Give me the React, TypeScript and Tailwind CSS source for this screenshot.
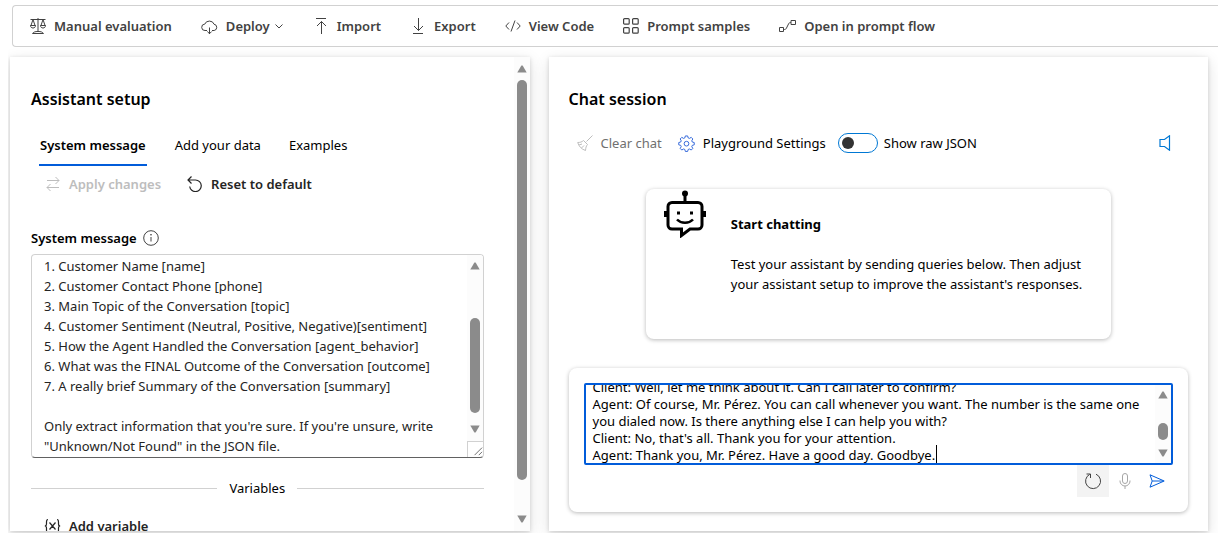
import { useLayoutEffect, useRef } from "react";
import type { ReactNode } from "react";

type IconProps = { children: ReactNode; className?: string; box?: string; stroke?: number };

function Icon({ children, className = "size-4", box = "0 0 16 16", stroke = 1 }: IconProps) {
  return (
    <svg
      viewBox={box}
      className={`shrink-0 ${className}`}
      fill="none"
      stroke="currentColor"
      strokeWidth={stroke}
      aria-hidden="true"
    >
      {children}
    </svg>
  );
}

const ScalesIcon = () => (
  <Icon>
    <path d="M.5 1.5h15M8 0v13.500M3 1.500.8 8M3 1.500 5.200 8M13 1.500 10.800 8M13 1.500l2.200 6.500M.5 7.500h5c0 1.500-1 2.500-2.500 2.500S.5 9 .5 7.500zM10.500 7.500h5c0 1.500-1 2.500-2.500 2.500s-2.500-1-2.500-2.500zM2.500 15.500h11c-1-1.500-2.500-2-5.500-2s-4.500.5-5.500 2z" />
  </Icon>
);

const CloudIcon = () => (
  <Icon className="h-4 w-[17px]" box="0 0 17 16">
    <path d="M6 12.500H4a3.200 3.200 0 0 1-.2-6.400A4.800 4.300 0 0 1 13 6.200a3.200 3.200 0 0 1 .2 6.300H11M8.500 9.500V16M6.300 13.500l2.200 2.200 2.200-2.200" />
  </Icon>
);

const ImportIcon = () => (
  <Icon>
    <path d="M3 .5h10M8.500 16V3.500M4 8l4.500-4.500L13 8" />
  </Icon>
);

const ExportIcon = () => (
  <Icon>
    <path d="M3 15.500h10M8.500 0v12.500M4 8l4.500 4.500L13 8" />
  </Icon>
);

const CodeIcon = () => (
  <Icon>
    <path d="M4 4.500.8 8 4 11.500M12 4.500 15.200 8 12 11.500M10 2.500l-4 11" />
  </Icon>
);

const GridIcon = () => (
  <Icon stroke={1.2}>
    <rect x=".6" y=".6" width="5.600" height="5.600" rx="1" />
    <rect x="9.600" y=".6" width="5.600" height="5.600" rx="1" />
    <rect x=".6" y="9.600" width="5.600" height="5.600" rx="1" />
    <rect x="9.600" y="9.600" width="5.600" height="5.600" rx="1" />
  </Icon>
);

const FlowIcon = () => (
  <Icon className="h-4 w-[17px]" box="0 0 17 16">
    <path d="M.5 9.500h4v4h-4zM12 2.500h4.500v4H12zM4.500 11.500h1c1 0 1.500-.4 2-1.500l2-4c.5-1 1-1.500 2-1.500h.5" />
  </Icon>
);

const TOOLBAR = [
  { label: "Manual evaluation", icon: <ScalesIcon /> },
  { label: "Deploy", icon: <CloudIcon />, menu: true },
  { label: "Import", icon: <ImportIcon /> },
  { label: "Export", icon: <ExportIcon /> },
  { label: "View Code", icon: <CodeIcon /> },
  { label: "Prompt samples", icon: <GridIcon /> },
  { label: "Open in prompt flow", icon: <FlowIcon /> },
];

const SYSTEM_MESSAGE = `1. Customer Name [name]
2. Customer Contact Phone [phone]
3. Main Topic of the Conversation [topic]
4. Customer Sentiment (Neutral, Positive, Negative)[sentiment]
5. How the Agent Handled the Conversation [agent_behavior]
6. What was the FINAL Outcome of the Conversation [outcome]
7. A really brief Summary of the Conversation [summary]

Only extract information that you're sure. If you're unsure, write "Unknown/Not Found" in the JSON file.`;

const QUERY = `Client: Well, let me think about it. Can I call later to confirm?
Agent: Of course, Mr. Pérez. You can call whenever you want. The number is the same one you dialed now. Is there anything else I can help you with?
Client: No, that's all. Thank you for your attention.
Agent: Thank you, Mr. Pérez. Have a good day. Goodbye.`;

function Arrow({ down = false }: { down?: boolean }) {
  return (
    <svg viewBox="0 0 10 8" className="h-2 w-[10px] shrink-0 fill-[#8b8b8b]" aria-hidden="true">
      <path d={down ? "M.3.5h9.400L5.600 7.500H4.400z" : "M.3 7.500h9.400L5.600.5H4.400z"} />
    </svg>
  );
}

function Scrollbar({ className, before, thumb, after }: { className: string; before: string; thumb: string; after: string }) {
  return (
    <div className={`flex w-4 shrink-0 flex-col items-center bg-[#fcfcfc] ${className}`} aria-hidden="true">
      <Arrow />
      <div className={before} />
      <div className={`w-[10px] rounded-full bg-[#8b8b8b] ${thumb}`} />
      <div className={after} />
      <Arrow down />
    </div>
  );
}

function Toolbar() {
  return (
    <header className="ml-3 mt-[5px] flex h-[42px] shrink-0 items-center gap-[29px] overflow-hidden rounded-l border border-r-0 border-[#d1d1d1] pl-[17px] text-[#424242]">
      {TOOLBAR.map((item) => (
        <button key={item.label} type="button" className="flex items-center gap-2 whitespace-nowrap font-semibold">
          {item.icon}
          <span className="flex items-center gap-1">
            {item.label}
            {item.menu && (
              <Icon className="size-[10px]" box="0 0 10 10">
                <path d="M1.500 3.500 5 7l3.500-3.500" />
              </Icon>
            )}
          </span>
        </button>
      ))}
    </header>
  );
}

function AssistantSetup() {
  return (
    <section className="flex min-h-0 overflow-hidden bg-white shadow-[0_1px_4px_rgba(0,0,0,0.14),0_4px_14px_rgba(0,0,0,0.13)]">
      <div className="min-w-0 flex-1 overflow-hidden pl-[21px] pr-[30px] pt-[30px]">
        <h2 className="text-base font-semibold leading-6">Assistant setup</h2>
        <nav className="ml-2 mt-[14px] flex h-[41px] gap-7" role="tablist">
          <button type="button" role="tab" aria-selected="true" className="border-b-2 border-[#015cda] px-px font-semibold">
            System message
          </button>
          <button type="button" role="tab" aria-selected="false" className="pb-[2px]">Add your data</button>
          <button type="button" role="tab" aria-selected="false" className="pb-[2px]">Examples</button>
        </nav>
        <div className="ml-[14px] mt-2 flex h-5 items-center gap-[26px] font-semibold">
          <button type="button" disabled className="flex items-center gap-2 text-[#bdbdbd]">
            <Icon>
              <path d="M2 4.500h12M10.500 1 14 4.500 10.500 8M14 11.500H2M5.500 8 2 11.500 5.500 15" />
            </Icon>
            Apply changes
          </button>
          <button type="button" className="flex items-center gap-2 text-[#242424]">
            <Icon stroke={1.2}>
              <path d="M4.500.5 1 4l3.500 3.500M1 4h7.500a5.800 5.800 0 1 1-5.800 6.500" />
            </Icon>
            Reset to default
          </button>
        </div>
        <div className="mt-[34px] flex h-5 items-center gap-[6px]">
          <label htmlFor="system-message" className="font-semibold">System message</label>
          <Icon className="size-4 text-[#424242]">
            <circle cx="8" cy="8" r="7.300" />
            <path d="M8 7v4.500" />
            <circle cx="8" cy="4.800" r=".4" fill="currentColor" />
          </Icon>
        </div>
        <div className="mt-[6px] flex h-[204px] overflow-hidden rounded border border-[#d1d1d1] border-b-[#616161]">
          <textarea
            id="system-message"
            defaultValue={SYSTEM_MESSAGE}
            className="min-w-0 flex-1 resize-none overflow-hidden pl-3 pt-px leading-5 text-[#242424] outline-none"
          />
          <div className="flex w-4 shrink-0 flex-col">
            <Scrollbar className="flex-1 pb-2 pt-[7px]" before="h-12" thumb="flex-1" after="h-3" />
            <svg viewBox="0 0 16 16" className="size-4 border-l border-t border-[#d1d1d1]" stroke="#666" strokeWidth="1" aria-hidden="true">
              <path d="M7 14l8-8M11.500 14l3.500-3.500" />
            </svg>
          </div>
        </div>
        <div className="mt-5 flex h-5 items-center gap-3">
          <div className="h-px flex-1 bg-[#d1d1d1]" />
          <span>Variables</span>
          <div className="h-px flex-1 bg-[#d1d1d1]" />
        </div>
        <button type="button" className="ml-[13px] mt-[18px] flex h-5 items-center gap-2 font-semibold text-[#242424]">
          <Icon className="h-4 w-[17px]" box="0 0 17 16" stroke={1.2}>
            <path d="M4 1.500C2.500 1.500 2.500 2.500 2.500 4v2c0 1-.5 2-1.700 2 1.200 0 1.700 1 1.700 2v2c0 1.500 0 2.500 1.500 2.500M13 1.500c1.500 0 1.500 1 1.500 2.500v2c0 1 .5 2 1.700 2-1.200 0-1.700 1-1.700 2v2c0 1.500 0 2.500-1.500 2.500M5.500 4.500l6 7M11.500 4.500l-6 7" />
          </Icon>
          Add variable
        </button>
      </div>
      <Scrollbar className="pb-2 pt-2" before="h-[7px]" thumb="flex-1" after="h-[35px]" />
    </section>
  );
}

function Robot() {
  return (
    <svg viewBox="0 0 42 48" className="h-12 w-[42px] shrink-0" fill="none" stroke="#000" strokeWidth="3" aria-hidden="true">
      <path d="M21 4v8" />
      <circle cx="21" cy="3.500" r="3" fill="#000" stroke="none" />
      <path d="M8 12.500h26a4 4 0 0 1 4 4V35a4 4 0 0 1-4 4h-8l-8.500 6.500V39H8a4 4 0 0 1-4-4V16.500a4 4 0 0 1 4-4z" />
      <path d="M0 21h5v6H0zM37 21h5v6h-5zM13 21.500h3v3h-3zM26 21.500h3v3h-3z" fill="#000" stroke="none" />
      <path d="M13 29.500c4 4.300 12 4.300 16 0" strokeWidth="2.500" />
    </svg>
  );
}

const GEAR =
  "M7.300 1h2.400l.6 2.100 1.300.5 1.900-1.100 1.700 1.700-1.100 1.900.5 1.300 2.100.6v2.400l-2.100.6-.5 1.300 1.100 1.900-1.700 1.700-1.900-1.100-1.300.5-.6 2.100H7.300l-.6-2.100-1.300-.5-1.900 1.100-1.700-1.700 1.100-1.900-.5-1.300L.3 10.400V8l2.100-.6.5-1.300-1.100-1.900 1.700-1.700 1.900 1.100 1.300-.5z";

function ChatSession() {
  const query = useRef<HTMLTextAreaElement>(null);

  useLayoutEffect(() => {
    const box = query.current;
    if (box) box.scrollTop = box.scrollHeight - box.clientHeight - 1;
  }, []);

  return (
    <section className="flex min-h-0 flex-col overflow-hidden bg-white px-5 pb-[19px] pt-[30px] shadow-[0_1px_4px_rgba(0,0,0,0.14),0_4px_14px_rgba(0,0,0,0.13)]">
      <h2 className="text-base font-semibold leading-6">Chat session</h2>
      <div className="ml-2 mr-[17px] mt-[22px] flex h-5 shrink-0 items-center">
        <button type="button" disabled className="flex items-center gap-2 text-[#707070]">
          <Icon className="size-4 text-[#bdbdbd]">
            <path d="M15.500.5 9.500 6.500M6.500 5.500l4 4M6.500 5.500C5 7 3 7.500.7 7.500c1.300 4 3.500 6.500 7.800 8 .3-2.500.5-4.500 2-6M2 10l3-1M4.500 13l2.500-2.500" />
          </Icon>
          Clear chat
        </button>
        <button type="button" className="ml-4 flex items-center gap-2">
          <Icon className="size-[17px] text-[#2b62d9]" box="0 0 17 18">
            <path d={GEAR} strokeLinejoin="round" />
            <circle cx="8.500" cy="9.200" r="2.500" />
          </Icon>
          Playground Settings
        </button>
        <label className="ml-3 flex items-center gap-[6px]">
          <input type="checkbox" role="switch" className="peer sr-only" />
          <span className="flex h-5 w-10 items-center rounded-full border border-[#0078d4] px-[3px] peer-checked:justify-end">
            <span className="size-3 rounded-full bg-[#333]" />
          </span>
          Show raw JSON
        </label>
        <button type="button" aria-label="Speaker" className="ml-auto">
          <Icon className="h-4 w-3 text-[#0078d4]" box="0 0 12 16" stroke={1.2}>
            <path d="M10.500.8v14.400L5.500 11.500H1v-7h4.500z" />
          </Icon>
        </button>
      </div>

      <div className="mt-9 flex h-[150px] w-[465px] shrink-0 self-center rounded-lg pl-[18px] shadow-[0_1px_4px_rgba(0,0,0,0.28)]">
        <div className="pt-px">
          <Robot />
        </div>
        <div className="ml-[25px] mr-4 flex flex-col gap-5 pt-[25px] leading-5">
          <h3 className="font-bold">Start chatting</h3>
          <p>Test your assistant by sending queries below. Then adjust your assistant setup to improve the assistant's responses.</p>
        </div>
      </div>

      <div className="mt-auto shrink-0 rounded-lg px-[15px] pb-[15px] pt-[15px] shadow-[0_1px_4px_rgba(0,0,0,0.28)]">
        <div className="relative flex h-[82px] rounded-xs border-2 border-[#015cda]">
          <textarea
            ref={query}
            aria-label="User query"
            defaultValue={QUERY}
            className="min-w-0 flex-1 resize-none overflow-hidden pl-[7px] leading-[17px] outline-none"
          />
          <span className="absolute bottom-0 left-[350px] h-[18px] w-px bg-black" />
          <Scrollbar className="pb-[6px] pt-[6px]" before="flex-1" thumb="h-[17px]" after="h-[9px]" />
        </div>
        <div className="flex justify-end">
          <button type="button" aria-label="Restart" className="flex size-8 items-center justify-center bg-[#f3f3f3] text-[#424242]">
            <Icon className="size-[18px]" box="0 0 18 18">
              <path d="M12 2.200a7.500 7.500 0 1 1-6.300.2M2.500 2h4v4" />
            </Icon>
          </button>
          <button type="button" aria-label="Microphone" disabled className="flex size-8 items-center justify-center text-[#a6a6a6]">
            <Icon>
              <path d="M8 .5a2.500 2.500 0 0 1 2.500 2.500v5a2.500 2.500 0 0 1-5 0V3A2.500 2.500 0 0 1 8 .5zM3 7.500V8a5 5 0 0 0 10 0v-.5M8 13v3" />
            </Icon>
          </button>
          <button type="button" aria-label="Send" className="flex size-8 items-center justify-center text-[#015cda]">
            <Icon>
              <path d="M1 1.800 15.200 8 1 14.200 3.200 8zM3.200 8h11" />
            </Icon>
          </button>
        </div>
      </div>
    </section>
  );
}

export default function App() {
  return (
    <div className="flex h-screen flex-col overflow-hidden bg-white font-['Noto_Sans','Open_Sans',sans-serif] text-[13px] leading-5 text-black">
      <Toolbar />
      <main className="mb-[10px] ml-2 grid min-h-0 flex-1 grid-cols-[26fr_33fr] grid-rows-[minmax(0,1fr)] gap-[19px] overflow-hidden pb-[2px] pl-[2px] pr-[10px] pt-[10px]">
        <AssistantSetup />
        <ChatSession />
      </main>
    </div>
  );
}
